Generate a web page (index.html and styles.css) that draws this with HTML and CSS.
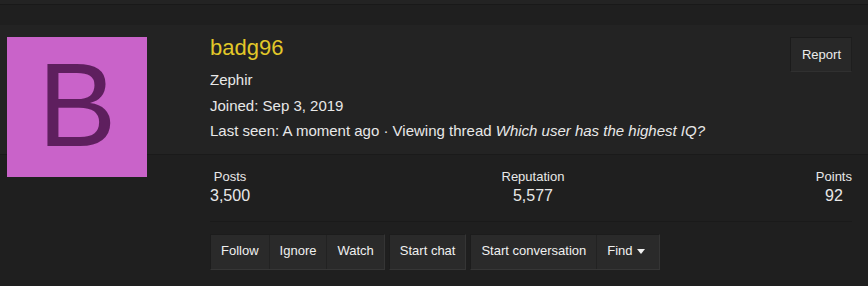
FILE: index.html
```html
<!DOCTYPE html>
<html>
<head>
<meta charset="utf-8">
<link rel="stylesheet" href="styles.css">
</head>
<body>
<div class="topbar"></div>
<div class="page">
  <div class="member-header">
    <div class="avatar-col">
      <div class="avatar">B</div>
    </div>
    <div class="member-main">
      <h1 class="username">badg96</h1>
      <div class="line">Zephir</div>
      <div class="line">Joined: Sep 3, 2019</div>
      <div class="line">Last seen: A moment ago · Viewing thread <em>Which user has the highest IQ?</em></div>
    </div>
    <div class="header-actions">
      <a class="btn">Report</a>
    </div>
  </div>
  <div class="member-body">
    <div class="stats">
      <div class="stat"><div class="stat-label">Posts</div><div class="stat-value">3,500</div></div>
      <div class="stat"><div class="stat-label">Reputation</div><div class="stat-value">5,577</div></div>
      <div class="stat"><div class="stat-label">Points</div><div class="stat-value">92</div></div>
    </div>
    <div class="actions">
      <div class="btn-group">
        <a class="gbtn">Follow</a><a class="gbtn">Ignore</a><a class="gbtn">Watch</a>
      </div>
      <div class="btn-group">
        <a class="gbtn">Start chat</a>
      </div>
      <div class="btn-group">
        <a class="gbtn">Start conversation</a><a class="gbtn find">Find<svg class="caret" width="8" height="5" viewBox="0 0 8 5"><path d="M0 0H8L4 5Z" fill="#f0f0f0"/></svg></a>
      </div>
    </div>
  </div>
</div>
</body>
</html>
```
FILE: styles.css
```css
* { box-sizing: border-box; }
body {
  margin: 0;
  background: #1f1f1f;
  font-family: "Liberation Sans", Arial, sans-serif;
  color: #e8e8e8;
}
.topbar {
  height: 5px;
  background: #232323;
  border-bottom: 1px solid #191919;
}
.page {
  padding-top: 20px;
}
.member-header {
  display: flex;
  align-items: flex-start;
  height: 130px;
  background: #232323;
  border-bottom: 1px solid #1a1a1a;
  padding: 0 16px 0 0;
}
.avatar-col {
  width: 210px;
  flex: none;
  padding: 12px 0 0 7px;
}
.avatar {
  width: 140px;
  height: 140px;
  position: relative;
  background: #c963c9;
  color: #5e1f5e;
  font-size: 118px;
  line-height: 136px;
  text-align: center;
}
.member-main {
  flex: 1;
  padding-top: 10px;
}
.username {
  margin: 0 0 6px;
  font-size: 22px;
  font-weight: normal;
  line-height: 26px;
  color: #e2c829;
}
.line {
  font-size: 15px;
  line-height: 25.5px;
}
.line em { font-style: italic; }
.header-actions {
  padding-top: 12px;
}
.btn {
  display: block;
  height: 35px;
  padding: 0 10px 0 11px;
  font-size: 13px;
  line-height: 33px;
  background: #282828;
  border: 1px solid;
  border-color: #1b1b1b #1e1e1e #303030 #1b1b1b;
  color: #ececec;
}
.member-body {
  padding: 0 16px 0 210px;
}
.stats {
  display: flex;
  justify-content: space-between;
  padding: 14px 0 14px;
  border-bottom: 1px solid #1a1a1a;
}
.stat {
  text-align: center;
}
.stat-label {
  font-size: 13px;
  line-height: 16px;
}
.stat-value {
  font-size: 16px;
  line-height: 22px;
}
.actions {
  display: flex;
  gap: 4px;
  margin-top: 12px;
}
.btn-group {
  display: flex;
  background: #2a2a2a;
  border: 1px solid;
  border-color: #1c1c1c #353535 #363636 #1c1c1c;
}
.gbtn {
  display: block;
  height: 34px;
  padding: 0 10px 2px;
  font-size: 13px;
  line-height: 32px;
  color: #f0f0f0;
  border-left: 1px solid #222;
}
.gbtn:first-child { border-left: 0; }
.find {
  padding-right: 14px;
}
.caret {
  margin-left: 4px;
  vertical-align: 1px;
}
```
